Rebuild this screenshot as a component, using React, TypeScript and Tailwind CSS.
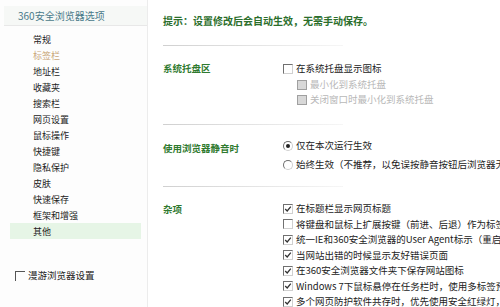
import React from "react";

const MENU = [
  "常规",
  "标签栏",
  "地址栏",
  "收藏夹",
  "搜索栏",
  "网页设置",
  "鼠标操作",
  "快捷键",
  "隐私保护",
  "皮肤",
  "快速保存",
  "框架和增强",
  "其他",
];

const MISC = [
  { label: "在标题栏显示网页标题", checked: true },
  { label: "将键盘和鼠标上扩展按键（前进、后退）作为标签切换", checked: false },
  { label: "统一IE和360安全浏览器的User Agent标示（重启后生效）", checked: true },
  { label: "当网站出错的时候显示友好错误页面", checked: true },
  { label: "在360安全浏览器文件夹下保存网站图标", checked: true },
  { label: "Windows 7下鼠标悬停在任务栏时，使用多标签预览", checked: true },
  { label: "多个网页防护软件共存时，优先使用安全红绿灯，提示用户", checked: true },
];

function Check({ checked, disabled }: { checked?: boolean; disabled?: boolean }) {
  return (
    <span
      className={`mr-[3px] inline-flex h-[10px] w-[10px] shrink-0 items-center justify-center border ${
        disabled
          ? "border-[#a0a0a0] bg-[#d8d8d8]"
          : "border-t-[#707070] border-l-[#707070] border-r-[#d0d0d0] border-b-[#d0d0d0] bg-white"
      }`}
    >
      {checked ? (
        <svg viewBox="0 0 10 10" className="h-[8px] w-[8px]">
          <path d="M1.5 5 L4 7.5 L8.5 2" fill="none" stroke="#333" strokeWidth="1.6" />
        </svg>
      ) : null}
    </span>
  );
}

function Radio({ checked }: { checked?: boolean }) {
  return (
    <span className="mr-[3px] inline-flex h-[10px] w-[10px] shrink-0 items-center justify-center rounded-full border border-t-[#707070] border-l-[#707070] border-r-[#d0d0d0] border-b-[#d0d0d0] bg-white">
      {checked ? <span className="h-[4px] w-[4px] rounded-full bg-[#222]" /> : null}
    </span>
  );
}

function Divider() {
  return (
    <div className="w-[180px] shrink-0">
      <div className="h-px bg-gradient-to-r from-[#d0d0d0] via-[#e4e4e4] to-[#f6f6f6]" />
    </div>
  );
}

export default function App() {
  return (
    <div
      className="flex h-[307px] w-[500px] overflow-hidden bg-white leading-none text-[#222]"
      style={{ fontFamily: '"Noto Sans CJK SC", "Liberation Sans", sans-serif' }}
    >
      <aside className="flex w-[148px] shrink-0 flex-col border-r border-[#ececec] bg-[#fdfdfd] text-[9px]">
        <div className="mt-[6px] ml-[4px] flex h-[20px] shrink-0 items-center border-b border-[#e8e8e8] bg-[#f6f8f6] pl-[14px] text-[10px] text-[#4a7a8a]">
          360安全浏览器选项
        </div>
        <ul className="mt-[5px] flex shrink-0 flex-col">
          {MENU.map((item) => (
            <li
              key={item}
              className={`flex h-[16px] items-center ${
                item === "标签栏" ? "text-[#c9a77a]" : ""
              } ${item === "其他" ? "mr-[6px] ml-[10px] bg-[#e6f5e6] pl-[23px]" : "pl-[33px]"}`}
            >
              {item}
            </li>
          ))}
        </ul>
        <div className="mt-[32px] flex shrink-0 items-center pl-[15px] text-[9.5px]">
          <span className="mr-[3px] inline-block h-[10px] w-[10px] border-t border-l border-[#555]" />
          漫游浏览器设置
        </div>
      </aside>

      <main className="flex min-w-0 flex-1 flex-col whitespace-nowrap pl-[15px] text-[9.5px]">
        <div className="flex h-[40px] shrink-0 items-center pt-[1px] text-[10px] font-bold text-[#2b6e2b]">
          提示：设置修改后会自动生效，无需手动保存。
        </div>
        <div className="mt-[5px]" />
        <Divider />

        <section className="flex shrink-0 pt-[15px]">
          <div className="w-[120px] shrink-0 pt-[3px] font-bold text-[#2f7a2f]">系统托盘区</div>
          <div className="flex flex-col">
            <div className="flex h-[16px] items-center">
              <Check />
              在系统托盘显示图标
            </div>
            <div className="flex h-[15px] items-center pl-[14px] text-[#b8b8b8]">
              <Check disabled />
              最小化到系统托盘
            </div>
            <div className="flex h-[15px] items-center pl-[14px] text-[#b8b8b8]">
              <Check disabled />
              关闭窗口时最小化到系统托盘
            </div>
          </div>
        </section>
        <div className="mt-[17px]" />
        <Divider />

        <section className="flex shrink-0 pt-[11px]">
          <div className="w-[120px] shrink-0 pt-[8px] font-bold text-[#2f7a2f]">使用浏览器静音时</div>
          <div className="flex flex-col">
            <div className="flex h-[19px] items-center">
              <Radio checked />
              仅在本次运行生效
            </div>
            <div className="flex h-[19px] items-center">
              <Radio />
              始终生效（不推荐，以免误按静音按钮后浏览器无声）
            </div>
          </div>
        </section>
        <div className="mt-[12px]" />
        <Divider />

        <section className="flex shrink-0 pt-[14px]">
          <div className="w-[120px] shrink-0 pt-[4px] font-bold text-[#2f7a2f]">杂项</div>
          <div className="flex flex-col">
            {MISC.map((m) => (
              <div key={m.label} className="flex h-[15.5px] shrink-0 items-center">
                <Check checked={m.checked} />
                {m.label}
              </div>
            ))}
          </div>
        </section>
      </main>
    </div>
  );
}
